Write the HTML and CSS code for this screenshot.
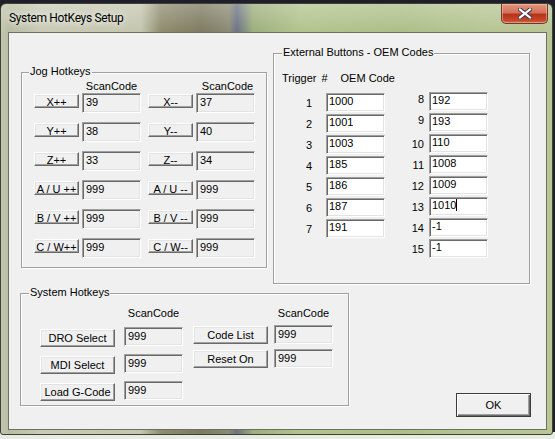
FILE: index.html
```html
<!DOCTYPE html>
<html>
<head>
<meta charset="utf-8">
<link rel="stylesheet" href="styles.css">
</head>
<body>
<div class="window">
  <div class="titlebar">
    <span class="title">System HotKeys Setup</span>
    <div class="close">
      <svg width="14" height="11" viewBox="0 0 14 11">
        <path d="M2 1.5 L12 9.5 M12 1.5 L2 9.5" stroke="#3c4050" stroke-width="4.2" stroke-linecap="square" fill="none"/>
        <path d="M2 1.5 L12 9.5 M12 1.5 L2 9.5" stroke="#ffffff" stroke-width="2.2" stroke-linecap="square" fill="none"/>
      </svg>
    </div>
  </div>
  <div class="client">
    <div class="top-row">
      <div class="group jog">
        <span class="legend">Jog Hotkeys</span>
        <div class="jog-head"><span class="h1">ScanCode</span><span class="h2">ScanCode</span></div>
        <div class="jog-rows">
          <div class="jrow">
            <div class="pair"><button class="btn jbtn">X++</button><div class="field">39</div></div>
            <div class="pair"><button class="btn jbtn">X--</button><div class="field">37</div></div>
          </div>
          <div class="jrow">
            <div class="pair"><button class="btn jbtn">Y++</button><div class="field">38</div></div>
            <div class="pair"><button class="btn jbtn">Y--</button><div class="field">40</div></div>
          </div>
          <div class="jrow">
            <div class="pair"><button class="btn jbtn">Z++</button><div class="field">33</div></div>
            <div class="pair"><button class="btn jbtn">Z--</button><div class="field">34</div></div>
          </div>
          <div class="jrow">
            <div class="pair"><button class="btn jbtn">A / U ++</button><div class="field">999</div></div>
            <div class="pair"><button class="btn jbtn">A / U --</button><div class="field">999</div></div>
          </div>
          <div class="jrow">
            <div class="pair"><button class="btn jbtn">B / V ++</button><div class="field">999</div></div>
            <div class="pair"><button class="btn jbtn">B / V --</button><div class="field">999</div></div>
          </div>
          <div class="jrow">
            <div class="pair"><button class="btn jbtn">C / W++</button><div class="field">999</div></div>
            <div class="pair"><button class="btn jbtn">C / W--</button><div class="field">999</div></div>
          </div>
        </div>
      </div>
      <div class="group ext">
        <span class="legend">External Buttons - OEM Codes</span>
        <div class="ext-head"><span>Trigger</span><span class="hash">#</span><span class="oem">OEM Code</span></div>
        <div class="ext-cols">
          <div class="ecol ecol1">
            <div class="erow"><span class="num">1</span><div class="field white">1000</div></div>
            <div class="erow"><span class="num">2</span><div class="field white">1001</div></div>
            <div class="erow"><span class="num">3</span><div class="field white">1003</div></div>
            <div class="erow"><span class="num">4</span><div class="field white">185</div></div>
            <div class="erow"><span class="num">5</span><div class="field white">186</div></div>
            <div class="erow"><span class="num">6</span><div class="field white">187</div></div>
            <div class="erow"><span class="num">7</span><div class="field white">191</div></div>
          </div>
          <div class="ecol ecol2">
            <div class="erow"><span class="num up">8</span><div class="field white">192</div></div>
            <div class="erow"><span class="num up">9</span><div class="field white">193</div></div>
            <div class="erow"><span class="num">10</span><div class="field white">110</div></div>
            <div class="erow"><span class="num">11</span><div class="field white">1008</div></div>
            <div class="erow"><span class="num">12</span><div class="field white">1009</div></div>
            <div class="erow"><span class="num">13</span><div class="field white"><span class="caret">1010</span></div></div>
            <div class="erow"><span class="num">14</span><div class="field white">-1</div></div>
            <div class="erow"><span class="num">15</span><div class="field white">-1</div></div>
          </div>
        </div>
      </div>
    </div>
    <div class="bottom-row">
      <div class="group sys">
        <span class="legend">System Hotkeys</span>
        <div class="sys-body">
          <div class="sgrid s1">
            <span></span><span class="shead">ScanCode</span>
            <button class="btn sbtn">DRO Select</button><div class="field">999</div>
            <button class="btn sbtn">MDI Select</button><div class="field">999</div>
            <button class="btn sbtn">Load G-Code</button><div class="field">999</div>
          </div>
          <div class="sgrid s2">
            <span></span><span class="shead">ScanCode</span>
            <button class="btn sbtn">Code List</button><div class="field">999</div>
            <button class="btn sbtn">Reset On</button><div class="field">999</div>
          </div>
        </div>
      </div>
      <button class="btn ok">OK</button>
    </div>
  </div>
</div>
</body>
</html>
```
FILE: styles.css
```css
html, body {
  margin: 0;
  padding: 0;
}
body {
  width: 555px;
  height: 439px;
  overflow: hidden;
  background: linear-gradient(to bottom, #1e1f2a 0, #1e1f2a 432px, #e6ece4 432px, #e6ece4 100%);
  font-family: "Liberation Sans", Arial, sans-serif;
  font-size: 11px;
  color: #000;
}
.window {
  box-sizing: border-box;
  width: 553px;
  height: 432px;
  margin-top: 3px;
  border: 1px solid #3d4232;
  border-radius: 6px 6px 3px 3px;
  padding: 0 5px 4px 7px;
  display: flex;
  flex-direction: column;
  background:
    linear-gradient(to bottom, rgba(255,255,255,0.25) 0, rgba(255,255,255,0) 28px),
    linear-gradient(to right, #c3c6b0 0, #b9bda2 8px, #c9cbb6 40px, #c4c6ae 140px, #8f8c6e 160px, #7d7a60 200px, #8b8a75 228px, #6c7286 236px, #9caf7c 252px, #b2c48d 300px, #adbf88 400px, #b5c592 480px, #b7c694 553px);
}
.titlebar {
  height: 28px;
  display: flex;
  justify-content: space-between;
  align-items: flex-start;
  flex: none;
}
.title {
  font-family: Roboto, "Noto Sans", sans-serif;
  font-size: 12px;
  letter-spacing: -0.35px;
  line-height: 16px;
  margin-top: 6px;
  padding-left: 1px;
  color: #000;
  text-shadow: 0 0 6px rgba(255,255,255,0.9), 0 0 10px rgba(255,255,255,0.6);
}
.close {
  box-sizing: border-box;
  width: 47px;
  height: 20px;
  margin-right: -1px;
  border: 1px solid #6b3a2c;
  border-top: none;
  border-radius: 0 0 5px 5px;
  background: linear-gradient(to bottom, #e4977e 0, #d5705a 45%, #b8321a 55%, #c4462a 85%, #dc6a44 100%);
  box-shadow: inset 0 0 0 1px rgba(255,210,190,0.45);
  display: flex;
  align-items: center;
  justify-content: center;
}
.close svg {
  display: block;
}
.client {
  box-sizing: border-box;
  width: 539px;
  height: 398px;
  border: 1px solid #6c7260;
  background: #f0f0f0;
  padding-top: 20px;
}
.top-row {
  display: flex;
  align-items: flex-start;
}
.bottom-row {
  display: flex;
  align-items: flex-start;
  margin-top: 9px;
}
.group {
  position: relative;
  box-sizing: border-box;
  border: 1px solid #a0a0a0;
  box-shadow: inset 1px 1px 0 #fff, 1px 1px 0 #fff;
}
.legend {
  position: absolute;
  top: -8px;
  line-height: 13px;
  background: #f0f0f0;
  padding: 0 1px;
  white-space: nowrap;
}
.jog {
  margin-left: 12px;
  margin-top: 19px;
  width: 246px;
  height: 196px;
}
.jog .legend { left: 7px; }
.jog-head {
  display: flex;
  padding-top: 7px;
  padding-left: 12px;
  height: 13px;
  line-height: 13px;
}
.jog-head span {
  width: 59px;
  text-align: center;
}
.jog-head .h1 { margin-left: 48px; }
.jog-head .h2 { margin-left: 57px; }
.jog-rows {
  margin-left: 12px;
  display: flex;
  flex-direction: column;
  gap: 9px;
}
.jrow {
  display: flex;
  gap: 7px;
}
.pair {
  display: flex;
  gap: 3px;
  align-items: flex-start;
}
.btn {
  box-sizing: border-box;
  font-family: "Liberation Sans", Arial, sans-serif;
  font-size: 11px;
  color: #000;
  padding: 0;
  margin: 0;
  background: #f0f0f0;
  border: 1px solid;
  border-color: #fff #696969 #696969 #fff;
  box-shadow: inset -1px -1px 0 #a0a0a0, inset 1px 1px 0 #e3e3e3;
  white-space: nowrap;
  cursor: default;
}
.jbtn {
  width: 45px;
  height: 14px;
  margin-top: 1px;
  line-height: 12px;
  padding-top: 1px;
  overflow: visible;
}
.field {
  box-sizing: border-box;
  width: 59px;
  height: 20px;
  border: 1px solid;
  border-color: #a0a0a0 #fff #fff #a0a0a0;
  box-shadow: inset 1px 1px 0 #696969, inset -1px -1px 0 #e3e3e3;
  background: #f0f0f0;
  padding-left: 3px;
  line-height: 17px;
  white-space: nowrap;
}
.field.white {
  background: #fff;
  height: 19px;
  padding-left: 2px;
  line-height: 15px;
}
.caret {
  border-right: 1px solid #000;
}
.ext {
  margin-left: 6px;
  width: 257px;
  height: 231px;
}
.ext .legend { left: 8px; }
.ext-head {
  display: flex;
  padding-left: 8px;
  margin-top: 18px;
  height: 13px;
  line-height: 13px;
}
.ext-head .hash { margin-left: 5px; }
.ext-head .oem { margin-left: 13px; }
.ext-cols {
  display: flex;
  align-items: flex-start;
  margin-top: 8px;
}
.ecol {
  display: flex;
  flex-direction: column;
  gap: 2px;
}
.erow {
  display: flex;
  align-items: center;
  height: 19px;
}
.num {
  text-align: right;
  line-height: 13px;
  padding-top: 2px;
}
.num.up {
  padding-top: 0;
  margin-top: -4px;
}
.ecol1 .num { width: 38px; margin-right: 14px; }
.ecol2 { margin-left: 20px; margin-top: -1px; }
.ecol2 .num { width: 19px; margin-right: 5px; }
.sys {
  margin-left: 11px;
  width: 329px;
  height: 113px;
}
.sys .legend { left: 8px; }
.sys-body {
  display: flex;
  align-items: flex-start;
  padding-left: 19px;
  padding-top: 13px;
}
.sgrid {
  display: grid;
  grid-template-columns: 75px 59px;
  align-items: start;
}
.s1 { column-gap: 9px; row-gap: 7px; }
.s2 { column-gap: 6px; row-gap: 5px; margin-left: 10px; }
.shead {
  line-height: 13px;
  text-align: center;
}
.s1 .field, .s2 .field { height: 19px; line-height: 16px; }
.sbtn {
  width: 75px;
  height: 18px;
  line-height: 15px;
}
.s1 .sbtn { margin-top: 2px; }
.s2 .sbtn { margin-top: 1px; }
.ok {
  margin-left: 107px;
  margin-top: 100px;
  width: 75px;
  height: 24px;
  border: 1px solid #3c3c3c;
  box-shadow: inset 1px 1px 0 #fff, inset -1px -1px 0 #696969, inset -2px -2px 0 #a0a0a0;
  line-height: 21px;
}
```
